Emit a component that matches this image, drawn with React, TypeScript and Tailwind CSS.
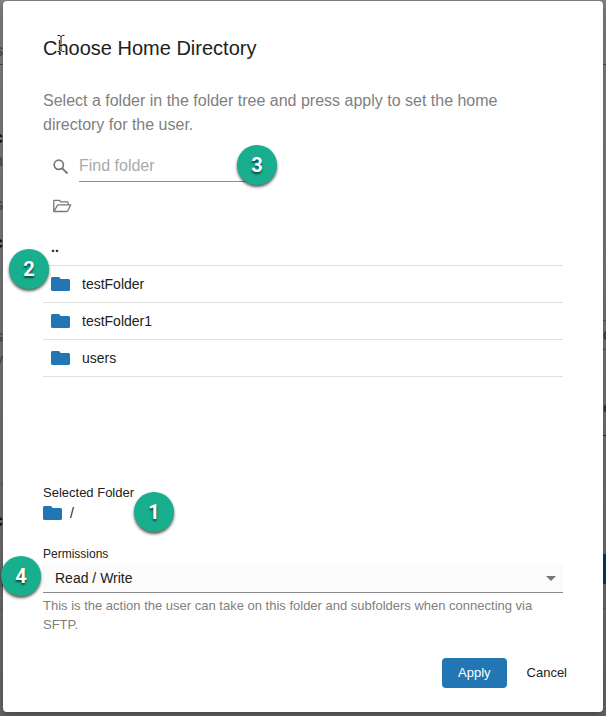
import { useState } from "react";
import clsx from "clsx";

const FOLDERS = ["testFolder", "testFolder1", "users"];

// Page content that peeks out on either side of the dialog
const LEFT_EDGE = [
    { text: "s", className: "mt-[41px] text-[#444]" },
    { text: "", className: "mt-[3px] h-px bg-[#4c4c4c]" },
    { text: "c", className: "mt-[63px] font-bold text-[#111]" },
    { text: "n", className: "mt-[3px] text-[#444]" },
    { text: "s", className: "mt-[24px] text-[#444]" },
    { text: "c", className: "mt-[18px] font-bold text-[#111]" },
    { text: "s", className: "mt-[74px] text-[#444]" },
    { text: "y", className: "mt-[3px] text-[#444]" },
    { text: "", className: "mt-[114px] h-px bg-[#5c5c5c]" },
    { text: "c", className: "mt-[26px] font-bold text-[#111]" },
    { text: "", className: "mt-[78px] h-px bg-[#5c5c5c]" },
];

const RIGHT_EDGE = [
    { text: "", className: "mt-[64px] h-px bg-[#4c4c4c]" },
    { text: "", className: "mt-[255px] h-px bg-[#3c556b]" },
    { text: "c", className: "mt-[5px] text-[#123a5c]" },
    { text: "", className: "mt-[5px] h-px bg-[#3c556b]" },
    { text: "c", className: "mt-[49px] font-bold text-[#123a5c]" },
    { text: "", className: "mt-[18px] h-px bg-[#123049]" },
    { text: "", className: "mt-[48px] h-px bg-[#666]" },
    { text: "", className: "mt-[69px] h-[30px] bg-[#0d395c]" },
    { text: "", className: "mt-[24px] h-px bg-[#5c5c5c]" },
];

function FolderIcon() {
    return (
        <svg viewBox="0 0 19 14" className="h-[14px] w-[19px] shrink-0" fill="#2176b3" aria-hidden="true">
            <path d="M1.500 0h6c.6 0 1 .2 1.300.700l.9 1.300h7.800c.8 0 1.500.7 1.500 1.500v9c0 .8-.7 1.500-1.500 1.500h-16C.7 14 0 13.300 0 12.500v-11C0 .7.7 0 1.500 0z" />
        </svg>
    );
}

function Badge({ value, className }: { value: number; className: string }) {
    return (
        <span
            className={clsx(
                "absolute z-10 flex size-10 items-center justify-center rounded-full bg-[#18ae8e] font-[Roboto,sans-serif] text-xl font-bold text-white shadow-[0_2px_3px_rgba(0,0,0,0.65)] [text-shadow:0_2px_2px_rgba(0,0,0,0.6)]",
                className
            )}
        >
            {value}
        </span>
    );
}

export default function App() {
    const [query, setQuery] = useState("");
    const [permission, setPermission] = useState("rw");

    return (
        <div className="relative min-h-screen bg-[#747474] px-[3px] pt-px pb-1 font-['Liberation_Sans',Arial,sans-serif] text-[#212121]">
            {/* Dimmed page */}
            <div aria-hidden="true" className="absolute inset-0 flex justify-between overflow-hidden bg-linear-to-b from-[#808080] via-[#747474] to-[#666]">
                <div className="w-[3px] overflow-hidden">
                    {LEFT_EDGE.map((item, i) => (
                        <div key={i} className={clsx("flex justify-end text-base leading-5", item.className)}>
                            {item.text}
                        </div>
                    ))}
                </div>
                <div className="w-[3px] overflow-hidden">
                    {RIGHT_EDGE.map((item, i) => (
                        <div key={i} className={clsx("text-base leading-[18px]", item.className)}>
                            {item.text}
                        </div>
                    ))}
                </div>
            </div>

            <div
                role="dialog"
                aria-labelledby="dialog-title"
                className="relative rounded bg-white px-10 pt-[31px] pb-6 shadow-[0_4px_8px_rgba(0,0,0,0.3)]"
            >
                <div className="relative">
                    <h1 id="dialog-title" className="text-xl leading-8">
                        Choose Home Directory
                    </h1>
                    {/* Text cursor */}
                    <svg viewBox="0 0 8 17" className="absolute top-[3px] left-[14px] h-[17px] w-2" fill="none" aria-hidden="true">
                        <path d="M.5.5H2c1 0 2 .5 2 1.500v13c0 1-1 1.500-2 1.500H.5M7.500.5H6c-1 0-2 .5-2 1.500m0 13c0 1 1 1.500 2 1.500h1.500M2.500 10.500h3" stroke="#fff" strokeWidth="2" />
                        <path d="M.5.5H2c1 0 2 .5 2 1.500v13c0 1-1 1.500-2 1.500H.5M7.500.5H6c-1 0-2 .5-2 1.500m0 13c0 1 1 1.500 2 1.500h1.500M2.500 10.500h3" stroke="#111" />
                    </svg>
                </div>

                <p className="mt-[25px] pr-10 text-base text-[#808080]">
                    Select a folder in the folder tree and press apply to set the home directory for the user.
                </p>

                <div className="relative mt-3 flex items-center pl-2">
                    <svg viewBox="0 0 16 16" className="mt-0.5 size-5 shrink-0 p-[2px]" fill="none" stroke="#777" aria-hidden="true">
                        <circle cx="5.800" cy="5.800" r="4.600" strokeWidth="1.700" />
                        <path d="M9.300 9.300l5.200 5.200" strokeWidth="1.900" />
                    </svg>
                    <input
                        type="text"
                        aria-label="Find folder"
                        placeholder="Find folder"
                        value={query}
                        onChange={(e) => setQuery(e.target.value)}
                        className="ml-2 h-[33px] w-[180px] border-b border-[#8c8c8c] pt-0.5 text-base outline-none placeholder:text-[#aaa]"
                    />
                    <Badge value={3} className="-top-1 left-[194px]" />
                </div>

                <button type="button" aria-label="Open folder" className="mt-[17px] ml-[10px] block">
                    <svg viewBox="0 0 19 14" className="h-[14px] w-[19px]" fill="none" stroke="#777" strokeWidth="1.300" strokeLinejoin="round" aria-hidden="true">
                        <path d="M.8 12.500V1.300h5.400l1.600 1.500h6.400c.6 0 .9.3.9.9v2.100M.8 12.500l3.700-6.200.8-.5h12.500l-3.200 6.200-.8.500z" />
                    </svg>
                </button>

                <ul className="relative mt-4 text-sm">
                    <li className="flex h-[37px] items-center border-b border-[#e0e0e0] px-2">
                        <button type="button" className="text-sm font-bold">..</button>
                    </li>
                    {FOLDERS.map((name) => (
                        <li key={name} className="flex h-[37px] items-center gap-3 border-b border-[#e0e0e0] px-2">
                            <FolderIcon />
                            {name}
                        </li>
                    ))}
                    <li className="contents">
                        <Badge value={2} className="top-5 -left-[34px]" />
                    </li>
                </ul>

                <div className="relative mt-[108px]">
                    <p className="text-[13px] leading-4">Selected Folder</p>
                    <p className="mt-0.5 flex h-5 items-center gap-2 text-sm">
                        <FolderIcon />
                        /
                    </p>
                    <Badge value={1} className="top-[7px] left-[91px]" />
                </div>

                <div className="relative mt-[23px]">
                    <label htmlFor="permissions" className="block text-xs leading-4">
                        Permissions
                    </label>
                    <div className="relative mt-px">
                        <select
                            id="permissions"
                            value={permission}
                            onChange={(e) => setPermission(e.target.value)}
                            className="block h-[30px] w-full appearance-none border-b border-[#8c8c8c] bg-[#fbfbfb] px-3 text-sm outline-none"
                        >
                            <option value="rw">Read / Write</option>
                            <option value="r">Read</option>
                            <option value="w">Write</option>
                        </select>
                        <svg viewBox="0 0 10 5" className="pointer-events-none absolute top-[13px] right-[7px] h-[5px] w-[10px]" fill="#777" aria-hidden="true">
                            <path d="M0 0h10L5 5z" />
                        </svg>
                    </div>
                    <p className="mt-[3px] pr-6 text-[13px] leading-[19px] text-[#808080]">
                        This is the action the user can take on this folder and subfolders when connecting via SFTP.
                    </p>
                    <Badge value={4} className="top-2.5 -left-[42px]" />
                </div>

                <div className="mt-6 -mr-4 flex justify-end gap-2 text-[13px]">
                    <button type="button" className="h-[30px] rounded bg-[#2176b3] px-4 text-white">
                        Apply
                    </button>
                    <button type="button" className="h-[30px] px-3">
                        Cancel
                    </button>
                </div>
            </div>
        </div>
    );
}
